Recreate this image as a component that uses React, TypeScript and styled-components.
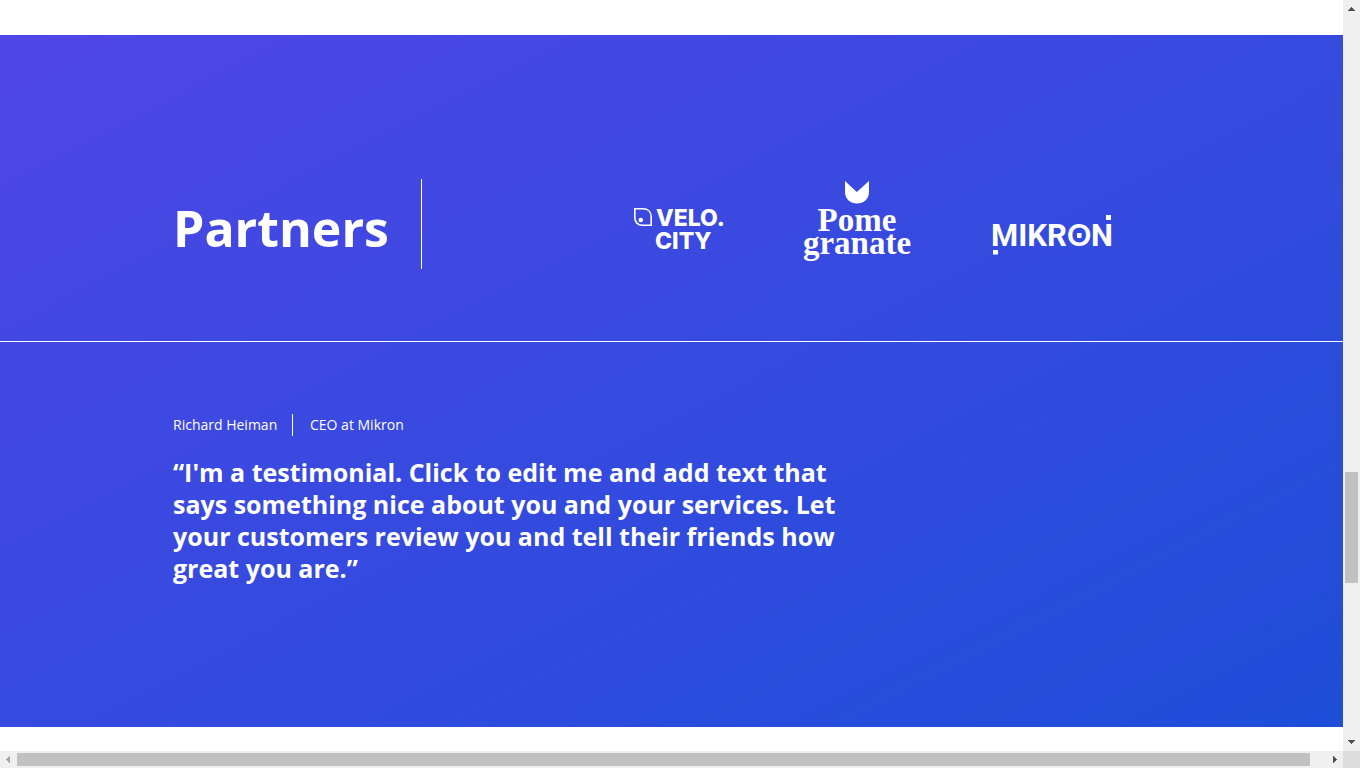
import React from "react";
import styled, { createGlobalStyle } from "styled-components";

const GlobalStyle = createGlobalStyle`
  * { box-sizing: border-box; }
  body {
    margin: 0;
    background: #ffffff;
    color: #ffffff;
    font-family: "Segoe UI", "Open Sans", "Noto Sans", sans-serif;
    overflow: hidden;
  }
  h2, p, blockquote { margin: 0; }
`;

const Window = styled.div`
  display: grid;
  grid-template-columns: minmax(0, 1fr) 17px;
  grid-template-rows: minmax(0, 1fr) 17px;
  height: 100vh;
`;

const Page = styled.main`
  overflow: hidden;
  padding: 35px 0 24px;
`;

const Band = styled.div`
  background: linear-gradient(to bottom right, #4f46e5, #1d4ed8);
`;

const Container = styled.div`
  width: 100%;
  max-width: 997px;
  margin: 0 auto;
`;

const PartnersSection = styled.section`
  padding: 144px 0 72px;
  border-bottom: 1px solid #ffffff;
`;

const PartnersRow = styled(Container)`
  display: flex;
  align-items: center;
  justify-content: space-between;
  padding-right: 58px;
`;

const PartnersTitle = styled.h2`
  width: 249px;
  height: 90px;
  border-right: 1px solid #ffffff;
  font-size: 50px;
  line-height: 98px;
  font-weight: 700;
`;

const Logos = styled.div`
  display: flex;
  gap: 78px;
`;

const Logo = styled.svg`
  display: block;
  overflow: visible;
  fill: #ffffff;
`;

const TestimonialSection = styled.section`
  padding: 72px 0 143px;
`;

const Author = styled.div`
  display: flex;
  align-items: center;
  height: 22px;
  margin-bottom: 20px;
  font-size: 14px;
  line-height: 22px;
`;

const AuthorName = styled.p`
  width: 120px;
  border-right: 1px solid #ffffff;
`;

const AuthorRole = styled.p`
  padding-left: 17px;
`;

const Quote = styled.blockquote`
  max-width: 690px;
  font-size: 25px;
  line-height: 32px;
  font-weight: 700;
`;

const VerticalBar = styled.div`
  display: flex;
  flex-direction: column;
  align-items: center;
  justify-content: space-between;
  background: #f0f0f0;
`;

const HorizontalBar = styled.div`
  display: flex;
  align-items: center;
  justify-content: space-between;
  background: #f0f0f0;
`;

const VerticalTrack = styled.div`
  display: grid;
  grid-template-rows: 455fr 111fr 151fr;
  flex: 1;
  width: 13px;
`;

const HorizontalTrack = styled.div`
  display: grid;
  grid-template-columns: 1293fr 16fr;
  flex: 1;
  height: 13px;
`;

const Thumb = styled.div<{ $row?: number }>`
  grid-row: ${({ $row = 1 }) => $row};
  background: #c1c1c1;
`;

const Corner = styled.div`
  background: #dcdcdc;
`;

const Arrow = styled.svg<{ $muted?: boolean }>`
  display: block;
  flex: none;
  fill: ${({ $muted }) => ($muted ? "#a3a3a3" : "#505050")};
`;

function VeloLogo() {
  return (
    <Logo width="92" height="90" viewBox="0 0 92 90" role="img" aria-label="Velo.City">
      <path d="M2.8 29.8H11C16 29.8 19.2 33 19.2 38V46.2H10.5C5.7 46.2 2.8 43.2 2.8 38.5Z" fill="none" stroke="#ffffff" strokeWidth="1.6" />
      <circle cx="8.8" cy="41" r="2.3" />
      <g fontFamily="Inter, sans-serif" fontSize="23" fontWeight="800">
        <text x="24" y="47">VELO.</text>
        <text x="23" y="70">CITY</text>
      </g>
    </Logo>
  );
}

function PomegranateLogo() {
  return (
    <Logo width="110" height="90" viewBox="0 0 110 90" role="img" aria-label="Pomegranate">
      <path d="M43 2L54.8 13L67 2V13C67 20 61.5 24.5 55 24.5C48.5 24.5 43 20 43 13Z" />
      <g fontFamily="'Liberation Serif', serif" fontSize="33" fontWeight="700" textAnchor="middle">
        <text x="55" y="52">Pome</text>
        <text x="55" y="75">granate</text>
      </g>
    </Logo>
  );
}

function MikronLogo() {
  return (
    <Logo width="122" height="90" viewBox="0 0 122 90" role="img" aria-label="Mikron">
      <rect x="3" y="71" width="5" height="4.5" />
      <rect x="116" y="36" width="5" height="5" />
      <text y="67" fontFamily="Roboto, sans-serif" fontSize="31" fontWeight="700">
        <tspan x="1">MIKR</tspan>
        <tspan x="77" fontFamily="Lato, sans-serif" fontSize="30">O</tspan>
        <tspan x="101">N</tspan>
      </text>
      <rect x="87" y="54" width="4.5" height="5" />
    </Logo>
  );
}

export default function App() {
  return (
    <>
      <GlobalStyle />
      <Window>
        <Page>
          <Band>
            <PartnersSection>
              <PartnersRow>
                <PartnersTitle>Partners</PartnersTitle>
                <Logos>
                  <VeloLogo />
                  <PomegranateLogo />
                  <MikronLogo />
                </Logos>
              </PartnersRow>
            </PartnersSection>
            <TestimonialSection>
              <Container>
                <Author>
                  <AuthorName>Richard Heiman</AuthorName>
                  <AuthorRole>CEO at Mikron</AuthorRole>
                </Author>
                <Quote>
                  “I'm a testimonial. Click to edit me and add text that says something nice about you and your
                  services. Let your customers review you and tell their friends how great you are.”
                </Quote>
              </Container>
            </TestimonialSection>
          </Band>
        </Page>
        <VerticalBar aria-hidden="true">
          <Arrow width="17" height="17" viewBox="0 0 17 17" shapeRendering="crispEdges">
            <path d="M8 7h1v1h1v1h1v1h1v1H5v-1h1V9h1V8h1z" />
          </Arrow>
          <VerticalTrack>
            <Thumb $row={2} />
          </VerticalTrack>
          <Arrow width="17" height="17" viewBox="0 0 17 17" shapeRendering="crispEdges">
            <path d="M5 6h7v1h-1v1h-1v1H9v1H8V9H7V8H6V7H5z" />
          </Arrow>
        </VerticalBar>
        <HorizontalBar aria-hidden="true">
          <Arrow $muted width="17" height="17" viewBox="0 0 17 17" shapeRendering="crispEdges">
            <path d="M10 5v7H9v-1H8v-1H7V9H6V8h1V7h1V6h1V5z" />
          </Arrow>
          <HorizontalTrack>
            <Thumb />
          </HorizontalTrack>
          <Arrow width="17" height="17" viewBox="0 0 17 17" shapeRendering="crispEdges">
            <path d="M7 5h1v1h1v1h1v1h1v1h-1v1H9v1H8v1H7z" />
          </Arrow>
        </HorizontalBar>
        <Corner />
      </Window>
    </>
  );
}
